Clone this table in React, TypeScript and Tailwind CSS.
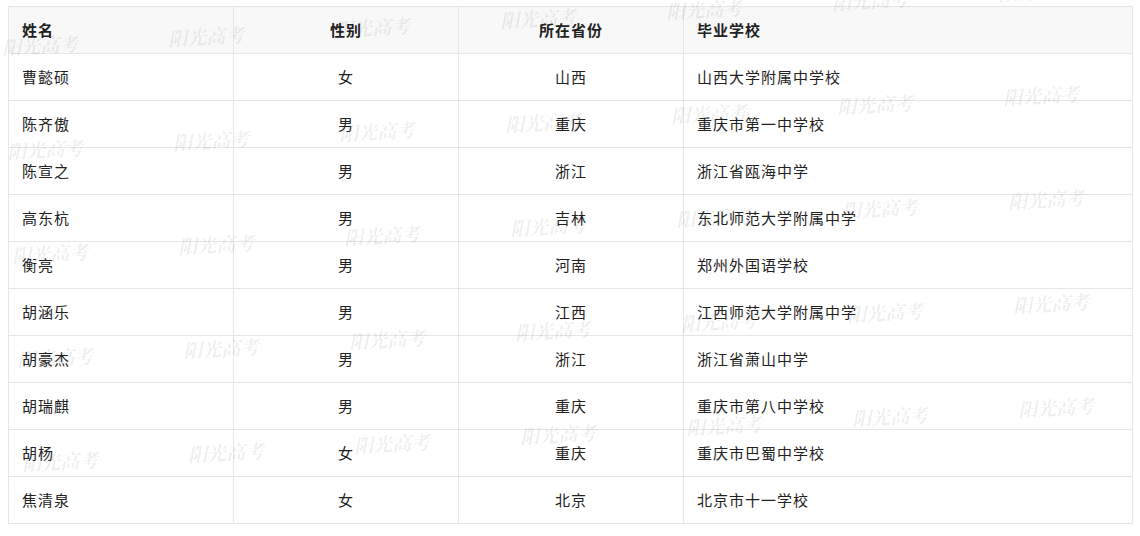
import React from "react";

const rows = [
  ["曹懿硕", "女", "山西", "山西大学附属中学校"],
  ["陈齐傲", "男", "重庆", "重庆市第一中学校"],
  ["陈宣之", "男", "浙江", "浙江省瓯海中学"],
  ["高东杭", "男", "吉林", "东北师范大学附属中学"],
  ["衡亮", "男", "河南", "郑州外国语学校"],
  ["胡涵乐", "男", "江西", "江西师范大学附属中学"],
  ["胡豪杰", "男", "浙江", "浙江省萧山中学"],
  ["胡瑞麒", "男", "重庆", "重庆市第八中学校"],
  ["胡杨", "女", "重庆", "重庆市巴蜀中学校"],
  ["焦清泉", "女", "北京", "北京市十一学校"],
];

// watermark grid: 5 bands x 7 columns, each step drifts a little
const marks: { left: number; top: number }[] = [];
for (let i = 0; i < 5; i++) {
  for (let j = 0; j < 7; j++) {
    marks.push({ left: 2 + 166 * j + 5 * i, top: 35 + 104 * i - 9 * j });
  }
}

const cell = "flex h-[47px] items-center border-r border-b border-[#e6e6e6] px-[13px]";

export default function App() {
  return (
    <div
      className="relative min-h-[536px] overflow-hidden bg-white pl-2 pt-[6px] text-[15px] tracking-[1px] text-[#222]"
      style={{ fontFamily: '"Noto Sans CJK SC", "Noto Sans", sans-serif' }}
    >
      <div className="grid w-[1125px] grid-cols-[225px_225px_225px_449px] border-t border-l border-[#e6e6e6]">
        <div className={`${cell} bg-[#f8f8f8] font-bold`}>姓名</div>
        <div className={`${cell} justify-center bg-[#f8f8f8] font-bold`}>性别</div>
        <div className={`${cell} justify-center bg-[#f8f8f8] font-bold`}>所在省份</div>
        <div className={`${cell} bg-[#f8f8f8] font-bold`}>毕业学校</div>
        {rows.map((r) => (
          <React.Fragment key={r[0]}>
            <div className={cell}>{r[0]}</div>
            <div className={`${cell} justify-center`}>{r[1]}</div>
            <div className={`${cell} justify-center`}>{r[2]}</div>
            <div className={cell}>{r[3]}</div>
          </React.Fragment>
        ))}
      </div>

      {/* 阳光高考 watermark */}
      {marks.map((m, k) => (
        <span
          key={k}
          className="pointer-events-none absolute -rotate-3 select-none whitespace-nowrap text-[19px] font-bold italic leading-none tracking-normal text-[rgba(0,0,0,0.08)]"
          style={{ left: m.left, top: m.top, fontFamily: '"Noto Serif CJK SC", "Noto Sans CJK SC", serif' }}
        >
          阳光高考
        </span>
      ))}
    </div>
  );
}
